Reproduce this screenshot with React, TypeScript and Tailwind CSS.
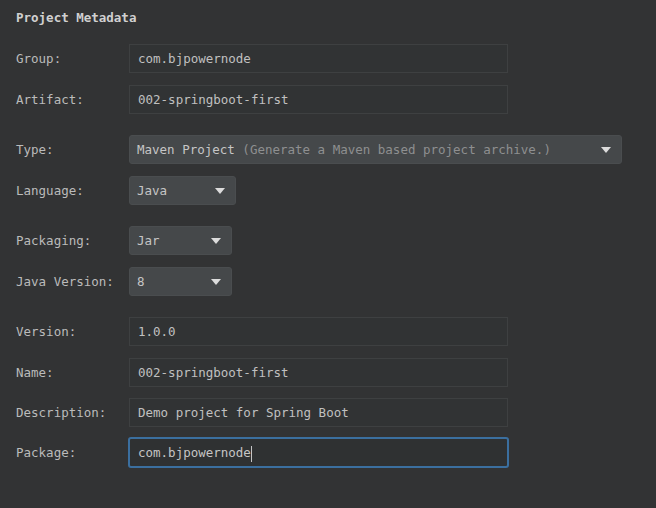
import React from "react";

const font = { fontFamily: '"DejaVu Sans Mono", "Liberation Mono", monospace' };

function Arrow() {
  return (
    <svg width="10" height="6" viewBox="0 0 10 6" className="shrink-0">
      <path d="M0 0 L10 0 L5 6 Z" fill="#dcdcdc" />
    </svg>
  );
}

function Label({ children }: { children: React.ReactNode }) {
  return <div className="w-[113px] shrink-0 pt-[2px] text-[#bbbbbb]">{children}</div>;
}

function TextField({ value, focused }: { value: string; focused?: boolean }) {
  if (focused) {
    return (
      <div className="w-[381px] h-[31px] -ml-px rounded-[3px] border-2 border-[#3b6f9f] bg-[#2f3132] flex items-center pl-[8px] pt-[2px] text-[#c5c5c5]">
        <span>{value}</span>
        <span className="w-px h-[16px] bg-[#c5c5c5]" />
      </div>
    );
  }
  return (
    <div className="w-[379px] h-[29px] border border-[#3e4041] bg-[#313334] flex items-center pl-[8px] pt-[2px] text-[#c0c0c0]">
      {value}
    </div>
  );
}

function Dropdown({ width, children }: { width: string; children: React.ReactNode }) {
  return (
    <div className={`${width} h-[29px] rounded-[3px] bg-[#45484a] border border-[#4a4d4f] flex items-center pl-[7px] pr-[10px] text-[#c5c5c5]`}>
      <div className="flex-1 whitespace-nowrap pt-[2px]">{children}</div>
      <Arrow />
    </div>
  );
}

function Row({ label, children, className = "" }: { label: string; children: React.ReactNode; className?: string }) {
  return (
    <div className={`flex items-center h-[29px] ${className}`}>
      <Label>{label}</Label>
      {children}
    </div>
  );
}

export default function App() {
  return (
    <div
      className="w-[656px] h-[508px] bg-[#323334] pl-4 pt-[10px] text-[12.5px] overflow-hidden"
      style={font}
    >
      <div className="h-[16px] leading-[16px] font-bold text-[#d0d0d0]">Project Metadata</div>
      <div className="mt-[18px] flex flex-col gap-[21px]">
        <div className="flex flex-col gap-[12px]">
          <Row label="Group:"><TextField value="com.bjpowernode" /></Row>
          <Row label="Artifact:"><TextField value="002-springboot-first" /></Row>
        </div>
        <div className="flex flex-col gap-[12px]">
          <Row label="Type:">
            <Dropdown width="w-[493px]">
              Maven Project <span className="text-[#8e8f90]">(Generate a Maven based project archive.)</span>
            </Dropdown>
          </Row>
          <Row label="Language:"><Dropdown width="w-[107px]">Java</Dropdown></Row>
        </div>
        <div className="flex flex-col gap-[12px]">
          <Row label="Packaging:"><Dropdown width="w-[103px]">Jar</Dropdown></Row>
          <Row label="Java Version:"><Dropdown width="w-[103px]">8</Dropdown></Row>
        </div>
        <div className="flex flex-col gap-[12px]">
          <Row label="Version:"><TextField value="1.0.0" /></Row>
          <Row label="Name:"><TextField value="002-springboot-first" /></Row>
          <Row label="Description:" className="-mt-px"><TextField value="Demo project for Spring Boot" /></Row>
          <Row label="Package:" className="-mt-px"><TextField value="com.bjpowernode" focused /></Row>
        </div>
      </div>
    </div>
  );
}
